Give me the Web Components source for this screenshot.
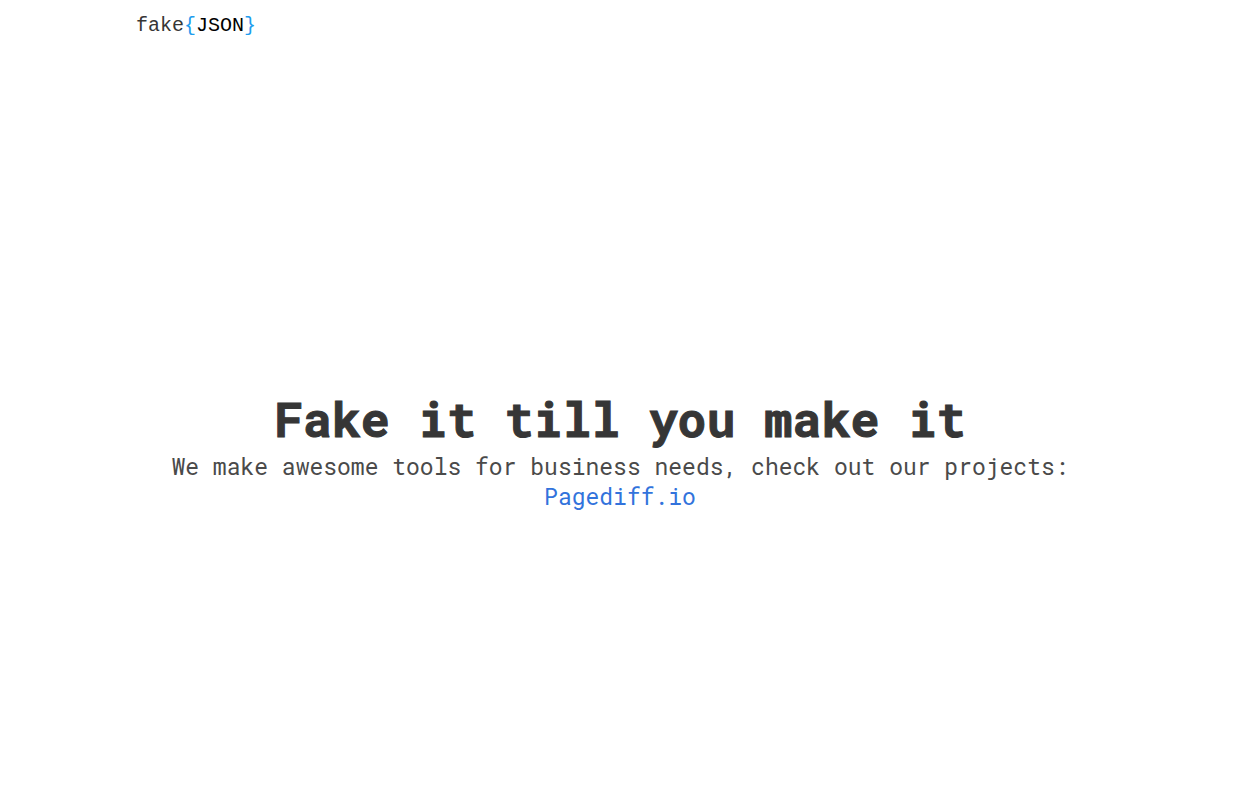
<!DOCTYPE html>
<html lang="en">
<head>
<meta charset="utf-8">
<meta name="viewport" content="width=device-width, initial-scale=1">
<title>fakeJSON</title>
<style>
html, body { margin: 0; }
body { background: #fff; color: #4a4a4a; font-family: "Roboto Mono", "Liberation Mono", monospace; }
</style>
</head>
<body>
<fake-page>
  <site-navbar slot="header"></site-navbar>
  <page-hero>
    <span slot="title">Fake it till you make it</span>
    <span slot="subtitle">We make awesome tools for business needs, check out our projects:</span>
    <project-link slot="projects" href="#pagediff">Pagediff.io</project-link>
  </page-hero>
</fake-page>
<script>
const define = (name, html, setup) => customElements.define(name, class extends HTMLElement {
  constructor() {
    super();
    this.attachShadow({ mode: "open" }).innerHTML = html;
  }
  connectedCallback() { if (setup) setup(this); }
});

define("fake-page", `
<style>
:host { display: flex; flex-direction: column; min-height: 100vh; }
main { flex: 1; display: flex; align-items: center; }
::slotted(page-hero) { flex: 1; }
</style>
<slot name="header"></slot>
<main><slot></slot></main>`);

define("site-navbar", `
<style>
:host { display: block; }
nav { display: flex; align-items: center; max-width: 992px; min-height: 52px; margin: 0 auto; }
a { padding: 8px 12px; font: 20px/30px "Liberation Mono", monospace; color: #363636; text-decoration: none; }
.brace { color: #209cee; }
.name { color: #000; }
</style>
<nav aria-label="Main"><a href="#home">fake<span class="brace">{</span><span class="name">JSON</span><span class="brace">}</span></a></nav>`);

define("page-hero", `
<style>
:host { display: block; }
section { max-width: 960px; margin: 0 auto; padding: 94px 24px 48px; text-align: center; }
h1 { margin: 0; font-size: 48px; line-height: 64px; font-weight: 700; color: #363636; -webkit-text-stroke: 1px currentColor; }
p { margin: 0; font-size: 23px; line-height: 30px; font-weight: 400; color: #4a4a4a; }
</style>
<section>
  <h1><slot name="title"></slot></h1>
  <p><slot name="subtitle"></slot></p>
  <p><slot name="projects"></slot></p>
</section>`);

define("project-link", `
<style>
:host { display: inline; }
a { color: #3273dc; text-decoration: none; }
</style>
<a><slot></slot></a>`, el => {
  el.shadowRoot.querySelector("a").href = el.getAttribute("href");
});
</script>
</body>
</html>
